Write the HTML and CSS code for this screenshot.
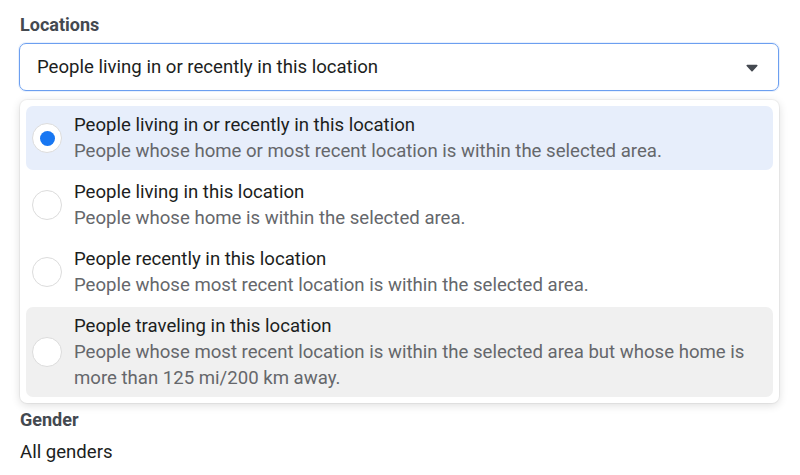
FILE: index.html
```html
<!DOCTYPE html>
<html>
<head>
<meta charset="utf-8">
<link rel="stylesheet" href="styles.css">
</head>
<body>
<div class="page">
  <div class="label">Locations</div>
  <div class="select">
    <span class="select-value">People living in or recently in this location</span>
    <svg class="caret" width="12" height="8" viewBox="0 0 12 8"><path d="M1.2 0.8h9.6a0.8 0.8 0 0 1 0.6 1.3L6.6 7.2a0.8 0.8 0 0 1-1.2 0L0.6 2.1A0.8 0.8 0 0 1 1.2 0.8z" fill="#444950"/></svg>
  </div>
  <div class="menu">
    <div class="option selected">
      <span class="radio checked"><span class="dot"></span></span>
      <div class="text">
        <div class="title">People living in or recently in this location</div>
        <div class="desc">People whose home or most recent location is within the selected area.</div>
      </div>
    </div>
    <div class="option">
      <span class="radio"></span>
      <div class="text">
        <div class="title">People living in this location</div>
        <div class="desc">People whose home is within the selected area.</div>
      </div>
    </div>
    <div class="option">
      <span class="radio"></span>
      <div class="text">
        <div class="title">People recently in this location</div>
        <div class="desc">People whose most recent location is within the selected area.</div>
      </div>
    </div>
    <div class="option hover">
      <span class="radio"></span>
      <div class="text">
        <div class="title">People traveling in this location</div>
        <div class="desc">People whose most recent location is within the selected area but whose home is more than 125 mi/200 km away.</div>
      </div>
    </div>
  </div>
  <div class="label label-gender">Gender</div>
  <div class="value">All genders</div>
</div>
</body>
</html>
```

FILE: styles.css
```css
* { box-sizing: border-box; }
html, body { margin: 0; padding: 0; background: #fff; }
body {
  font-family: Roboto, "Liberation Sans", Arial, sans-serif;
  color: #1c1e21;
  width: 800px;
  height: 475px;
  overflow: hidden;
}
.page {
  padding: 14px 21px 0 19px;
  display: flex;
  flex-direction: column;
}
.label {
  font-size: 18px;
  font-weight: 700;
  line-height: 22px;
  color: #444950;
  padding-left: 1px;
}
.select {
  margin-top: 7px;
  height: 48px;
  border: 1.5px solid #6c9ff0;
  border-radius: 7px;
  box-shadow: 0 0 0 1px rgba(108,159,240,0.15);
  display: flex;
  align-items: center;
  justify-content: space-between;
  padding: 0 20px 0 17px;
}
.select-value {
  font-size: 18.6px;
  color: #1c1e21;
}
.caret { display: block; margin-top: 1px; }
.menu {
  margin-top: 9px;
  margin-left: 1px;
  border-radius: 7px;
  background: #fff;
  box-shadow: 0 2px 10px rgba(0,0,0,0.14), 0 0 0 1px rgba(0,0,0,0.04);
  padding: 6px;
  display: flex;
  flex-direction: column;
  gap: 3px;
}
.option {
  display: flex;
  align-items: center;
  gap: 12px;
  padding: 6px 6px;
  border-radius: 7px;
}
.option.selected { background: #e7eefb; }
.option.hover { background: #f0f0f0; }
.radio {
  flex: none;
  width: 30px;
  height: 30px;
  border-radius: 50%;
  border: 1.5px solid #dcdcdc;
  background: #fff;
  display: flex;
  align-items: center;
  justify-content: center;
}
.dot {
  width: 15px;
  height: 15px;
  border-radius: 50%;
  background: #1877f2;
}
.text { display: flex; flex-direction: column; }
.title {
  font-size: 18.6px;
  line-height: 26px;
  color: #1c1e21;
}
.desc {
  font-size: 18.6px;
  line-height: 26px;
  color: #65676b;
}
.label-gender { margin-top: 6px; }
.value {
  margin-top: 9px;
  padding-left: 1px;
  font-size: 18.6px;
  line-height: 24px;
  color: #1c1e21;
}
```
